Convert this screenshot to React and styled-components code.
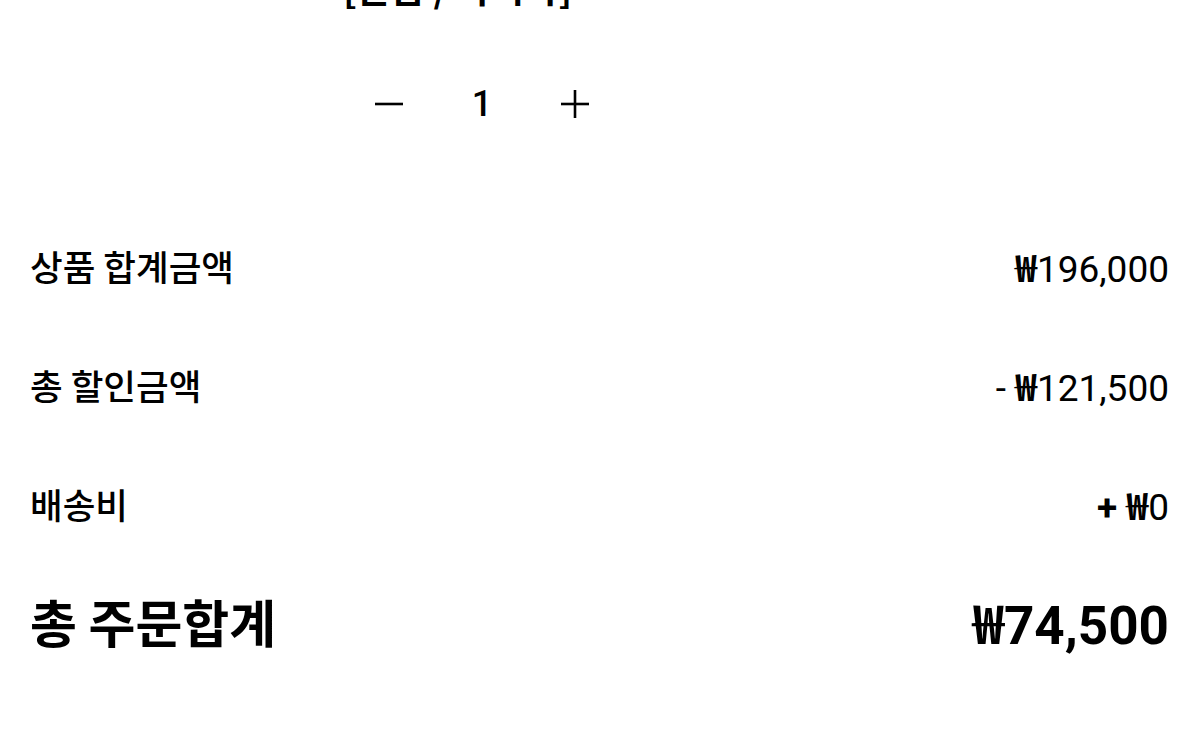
import React, { useState } from 'react';
import styled, { createGlobalStyle } from 'styled-components';

const GlobalStyle = createGlobalStyle`
  html, body {
    margin: 0;
    padding: 0;
    background: #ffffff;
    overflow: hidden;
  }
  body {
    font-family: Roboto, "Noto Sans CJK KR", sans-serif;
    color: #000000;
  }
`;

const rows = [
  { label: '상품 합계금액', sign: '', amount: '196,000' },
  { label: '총 할인금액', sign: '-', amount: '121,500' },
  { label: '배송비', sign: '+', amount: '0', boldSign: true },
];

const App = () => {
  const [count, setCount] = useState(1);

  return (
    <Page>
      <GlobalStyle />
      <Product>
        <Thumb />
        <Info>
          <Option>[본품 / 다시마]</Option>
          <Stepper>
            <StepButton aria-label="minus" onClick={() => setCount(Math.max(1, count - 1))}>
              <svg width="30" height="30" viewBox="0 0 30 30">
                <line x1="1" y1="15" x2="29" y2="15" stroke="#000" strokeWidth="2.6" />
              </svg>
            </StepButton>
            <Count>{count}</Count>
            <StepButton aria-label="plus" onClick={() => setCount(count + 1)}>
              <svg width="30" height="30" viewBox="0 0 30 30">
                <line x1="1" y1="15" x2="29" y2="15" stroke="#000" strokeWidth="2.6" />
                <line x1="15" y1="1" x2="15" y2="29" stroke="#000" strokeWidth="2.6" />
              </svg>
            </StepButton>
          </Stepper>
        </Info>
      </Product>

      <Summary>
        {rows.map((row) => (
          <SummaryRow key={row.label}>
            <Label>{row.label}</Label>
            <Value>
              {row.sign && <Sign $bold={row.boldSign}>{row.sign} </Sign>}
              <Won>₩</Won>
              {row.amount}
            </Value>
          </SummaryRow>
        ))}
        <TotalRow>
          <TotalLabel>총 주문합계</TotalLabel>
          <TotalValue>
            <Won>₩</Won>74,500
          </TotalValue>
        </TotalRow>
      </Summary>
    </Page>
  );
};

const Page = styled.div`
  width: 1200px;
  height: 739px;
  box-sizing: border-box;
  padding: 0 31px 0 30px;
  overflow: hidden;
`;

const Product = styled.div`
  display: grid;
  grid-template-columns: 313px 1fr;
`;

const Thumb = styled.div`
  background: #ffffff;
`;

const Info = styled.div`
  display: flex;
  flex-direction: column;
`;

const Option = styled.div`
  font-family: "Noto Sans CJK KR", sans-serif;
  font-size: 37px;
  font-weight: 700;
  line-height: 40px;
  margin-top: -33px;
  white-space: nowrap;
`;

const Stepper = styled.div`
  display: flex;
  align-items: center;
  gap: 45px;
  height: 60px;
  margin-top: 67px;
  margin-left: 22px;
`;

const StepButton = styled.button`
  width: 48px;
  height: 48px;
  display: flex;
  align-items: center;
  justify-content: center;
  padding: 0;
  border: none;
  background: none;
  cursor: pointer;
`;

const Count = styled.span`
  width: 48px;
  text-align: center;
  font-family: Roboto, sans-serif;
  font-size: 36px;
  font-weight: 500;
`;

const Summary = styled.div`
  display: flex;
  flex-direction: column;
  margin-top: 72px;
`;

const SummaryRow = styled.div`
  display: flex;
  align-items: center;
  justify-content: space-between;
  height: 119px;
`;

const Label = styled.span`
  font-family: "Noto Sans CJK KR", sans-serif;
  font-size: 35.5px;
  font-weight: 500;
`;

const Value = styled.span`
  font-family: Roboto, "Noto Sans CJK KR", sans-serif;
  font-size: 37px;
  font-weight: 400;
`;

const Sign = styled.span`
  font-weight: ${(p) => (p.$bold ? 700 : 400)};
`;

const Won = styled.span`
  font-family: "Noto Sans CJK KR", sans-serif;
  font-weight: 700;
`;

const TotalRow = styled(SummaryRow)`
  height: 115px;
`;

const TotalLabel = styled.span`
  font-family: "Noto Sans CJK KR", sans-serif;
  font-size: 51px;
  font-weight: 700;
`;

const TotalValue = styled.span`
  font-family: Roboto, "Noto Sans CJK KR", sans-serif;
  font-size: 53px;
  font-weight: 700;
`;

export default App;
